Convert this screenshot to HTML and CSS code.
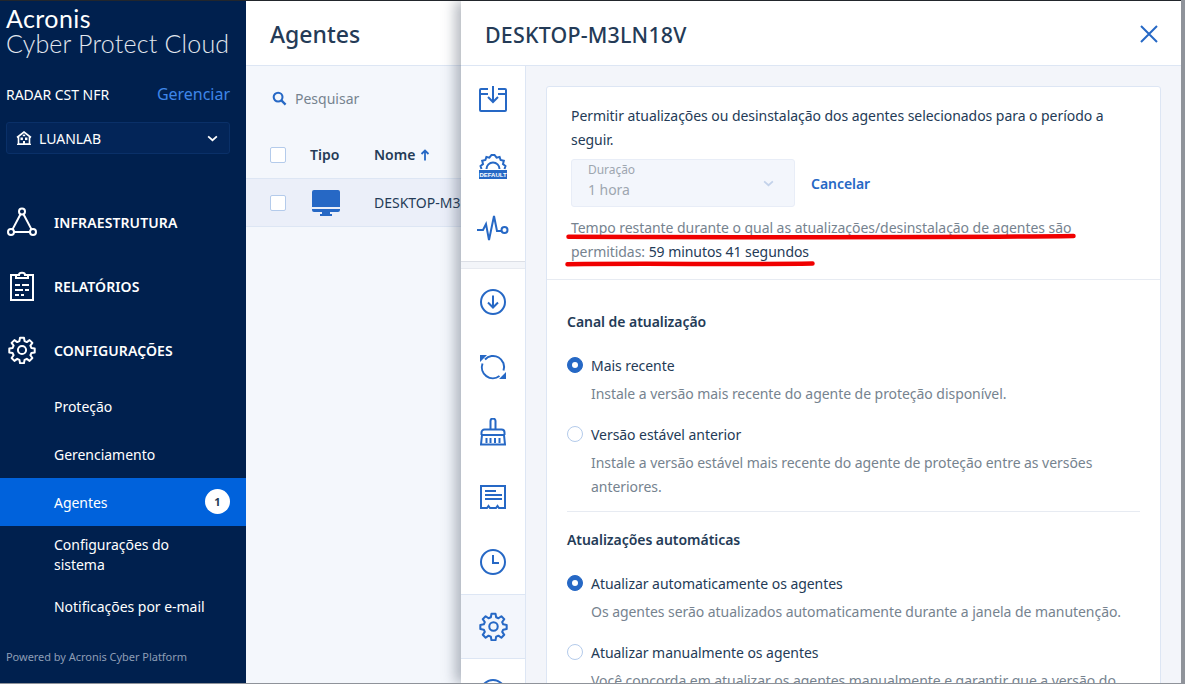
FILE: index.html
```html
<!DOCTYPE html>
<html lang="pt">
<head>
<meta charset="utf-8">
<title>Agentes</title>
<link rel="stylesheet" href="styles.css">
</head>
<body>
<div class="window">
  <aside class="sidebar">
    <div class="logo">
      <div class="logo-a">Acronis</div>
      <div class="logo-b">Cyber Protect Cloud</div>
    </div>
    <div class="account"><span>RADAR CST NFR</span><a class="manage">Gerenciar</a></div>
    <div class="tenant">
      <svg class="tenant-ic" viewBox="0 0 16 14" width="16" height="14"><path d="M1 6.500 8 1l7 5.500M2.500 6v7h11V6M1 13.500h14" fill="none" stroke="#fff" stroke-width="1.600"/><rect x="4.500" y="6.500" width="2.400" height="2.600" fill="#fff"/><rect x="9" y="6.500" width="2.400" height="2.600" fill="#fff"/><rect x="6.800" y="3.600" width="2.400" height="1.600" fill="#fff"/><rect x="7" y="10" width="2" height="3" fill="#fff"/></svg>
      <span class="tenant-name">LUANLAB</span>
      <svg class="chev" viewBox="0 0 12 8" width="11" height="7"><path d="M1 1.500 6 6l5-4.500" fill="none" stroke="#fff" stroke-width="2"/></svg>
    </div>
    <nav class="nav">
      <div class="nav-main">
        <svg viewBox="0 0 32 32" width="32" height="32"><g fill="none" stroke="#fff" stroke-width="2"><circle cx="16" cy="5.500" r="3"/><circle cx="5" cy="26" r="3"/><circle cx="27" cy="26" r="3"/><path d="M14.500 8.200 6.500 23.400M17.500 8.200l8 15.200M8 26h16"/></g></svg>
        <span>INFRAESTRUTURA</span>
      </div>
      <div class="nav-main">
        <svg viewBox="0 0 32 32" width="32" height="32"><g fill="none" stroke="#fff" stroke-width="2"><path d="M10 5H5v25h22V5h-5"/><path d="M10 8V5h3c0-3 6-3 6 0h3v3z"/></g><path d="M9 14h5v2H9zM16 14h7v2h-7zM9 19h8v2H9zM19 19h4v2h-4zM9 24h4v2H9zM15 24h3v2h-3z" fill="#fff"/></svg>
        <span>RELATÓRIOS</span>
      </div>
      <div class="nav-main">
        <svg class="nav-gear" viewBox="0 0 24 24" width="28" height="28"><use href="#gear" stroke="#fff"/></svg>
        <span>CONFIGURAÇÕES</span>
      </div>
      <div class="nav-subs">
        <div class="nav-sub">Proteção</div>
        <div class="nav-sub">Gerenciamento</div>
        <div class="nav-sub active">Agentes<span class="badge">1</span></div>
        <div class="nav-sub tall">Configurações do sistema</div>
        <div class="nav-sub">Notificações por e-mail</div>
      </div>
    </nav>
    <div class="powered">Powered by Acronis Cyber Platform</div>
  </aside>

  <main class="main">
    <header class="main-head">Agentes</header>
    <div class="search">
      <svg viewBox="0 0 16 16" width="15" height="15"><circle cx="6.500" cy="6.500" r="4.700" fill="none" stroke="#2668c5" stroke-width="2.200"/><path d="m10 10 4.500 4.500" stroke="#2668c5" stroke-width="2.400"/></svg>
      <span>Pesquisar</span>
    </div>
    <div class="table-head">
      <span class="check"></span>
      <span class="col-type">Tipo</span>
      <span class="col-name">Nome <svg viewBox="0 0 10 12" width="10" height="12"><path d="M5 11.500V2M1.500 5 5 1.500 8.500 5" fill="none" stroke="#2668c5" stroke-width="1.800"/></svg></span>
    </div>
    <div class="table-row">
      <span class="check"></span>
      <span class="col-type"><svg viewBox="0 0 28 26" width="28" height="26"><path d="M2 0h24a2 2 0 0 1 2 2v15H0V2a2 2 0 0 1 2-2zM0 19h28v1a2 2 0 0 1-2 2H18v2h2v2H8v-2h2v-2H2a2 2 0 0 1-2-2z" fill="#2668c5"/></svg></span>
      <span class="col-name regular">DESKTOP-M3LN18V</span>
    </div>
  </main>

  <section class="panel">
    <header class="panel-head">
      <h1>DESKTOP-M3LN18V</h1>
      <svg class="close" viewBox="0 0 18 18" width="18" height="18"><path d="m1 1 16 16M17 1 1 17" stroke="#2668c5" stroke-width="2" fill="none"/></svg>
    </header>
    <div class="panel-body">
      <div class="rail">
        <div class="rail-item"><svg viewBox="0 0 28 26" width="28" height="26"><g fill="none" stroke="#2668c5" stroke-width="2"><path d="M9 3H2a1 1 0 0 0-1 1v20a1 1 0 0 0 1 1h24a1 1 0 0 0 1-1V4a1 1 0 0 0-1-1h-7"/><path d="M1 8h8M19 8h8M14 0v15M9 11l5 5 5-5"/></g></svg></div>
        <div class="rail-item"><svg viewBox="0 0 28 30" width="28" height="30"><path d="M7.500 20a6.500 6.500 0 1 1 13 0M2.500 20l-1-3 2.500-2-.8-3.200 3.200-.8 1-3 3 .7L12.500 6h3l2.100 2.700 3-.7 1 3 3.200.8-.8 3.200 2.500 2-1 3" fill="none" stroke="#2668c5" stroke-width="2"/><rect y="21" width="28" height="9" fill="#2668c5"/><text x="14" y="28" class="default-txt">DEFAULT</text></svg></div>
        <div class="rail-item"><svg viewBox="0 0 32 28" width="32" height="28"><path d="M0 15h6l3-6 3 16 5-24 3 15h4" fill="none" stroke="#2668c5" stroke-width="2"/><circle cx="27.500" cy="15" r="3" fill="none" stroke="#2668c5" stroke-width="2"/></svg></div>
        <div class="rail-sep"></div>
        <div class="rail-item"><svg viewBox="0 0 26 26" width="26" height="26"><circle cx="13" cy="13" r="12" fill="none" stroke="#2668c5" stroke-width="2"/><path d="M13 6.500v12M8 13.500l5 5 5-5" fill="none" stroke="#2668c5" stroke-width="2"/></svg></div>
        <div class="rail-item"><svg viewBox="0 0 28 26" width="28" height="26"><path d="M6 5.500A11 11 0 0 1 24.500 16.500M3.500 9.500A11 11 0 0 0 20.500 22" fill="none" stroke="#2668c5" stroke-width="2"/><path d="M1 1h7L1 8zM27 25h-7l7-7z" fill="#2668c5"/></svg></div>
        <div class="rail-item"><svg viewBox="0 0 26 28" width="26" height="28"><path d="M10.500 11V3a2.500 2.500 0 0 1 5 0v8M1.500 17v-2.500a3 3 0 0 1 3-3h17a3 3 0 0 1 3 3V17M1.500 17h23M2 17l-1 9.500h24L24 17M6.500 20v5M10.500 20v5M15 20v5M19.500 20v5" fill="none" stroke="#2668c5" stroke-width="2"/></svg></div>
        <div class="rail-item"><svg viewBox="0 0 26 24" width="26" height="24"><path d="M1 1h24v22h-6l-1.500-2-1.500 2h-6l-1.500-2L7 23H1z" fill="none" stroke="#2668c5" stroke-width="2"/><path d="M5 5h11v2H5zM5 9h17v2H5zM5 13h17v2H5z" fill="#2668c5"/></svg></div>
        <div class="rail-item"><svg viewBox="0 0 26 26" width="26" height="26"><circle cx="13" cy="13" r="12" fill="none" stroke="#2668c5" stroke-width="2"/><path d="M13 6v8h6" fill="none" stroke="#2668c5" stroke-width="2"/></svg></div>
        <div class="rail-item selected"><svg viewBox="0 0 24 24" width="29" height="29"><use href="#gear" stroke="#2668c5"/></svg></div>
        <div class="rail-item"><svg viewBox="0 0 26 26" width="26" height="26"><circle cx="13" cy="13" r="12" fill="none" stroke="#2668c5" stroke-width="2"/></svg></div>
      </div>
      <div class="content">
        <div class="card">
          <div class="card-top">
            <p class="lead">Permitir atualizações ou desinstalação dos agentes selecionados para o período a seguir.</p>
            <div class="duration-row">
              <div class="duration">
                <div class="duration-text">
                  <div class="duration-label">Duração</div>
                  <div class="duration-value">1 hora</div>
                </div>
                <svg viewBox="0 0 12 8" width="11" height="7"><path d="M1 1.500 6 6l5-4.500" fill="none" stroke="#c3d2ea" stroke-width="2"/></svg>
              </div>
              <a class="cancel">Cancelar</a>
            </div>
            <p class="remaining">Tempo restante durante o qual as atualizações/desinstalação de agentes são permitidas: <span class="time">59 minutos 41 segundos</span></p>
          </div>
          <div class="card-rest">
            <h2 class="group-title">Canal de atualização</h2>
            <div class="radio-opt on first"><span class="radio"></span>Mais recente</div>
            <p class="hint">Instale a versão mais recente do agente de proteção disponível.</p>
            <div class="radio-opt"><span class="radio"></span>Versão estável anterior</div>
            <p class="hint">Instale a versão estável mais recente do agente de proteção entre as versões anteriores.</p>
            <hr class="rule">
            <h2 class="group-title second">Atualizações automáticas</h2>
            <div class="radio-opt on lead-opt"><span class="radio"></span>Atualizar automaticamente os agentes</div>
            <p class="hint">Os agentes serão atualizados automaticamente durante a janela de manutenção.</p>
            <div class="radio-opt"><span class="radio"></span>Atualizar manualmente os agentes</div>
            <p class="hint">Você concorda em atualizar os agentes manualmente e garantir que a versão do agente esteja sempre atualizada.</p>
          </div>
        </div>
      </div>
    </div>
    <svg class="marks" viewBox="0 0 720 684" width="720" height="684"><path d="M107.500 236.800C250 237 480 238 612.500 236M106.500 264.200C200 263 270 264.800 351.500 263.500" fill="none" stroke="#f00000" stroke-width="4.500" stroke-linecap="round"/></svg>
  </section>
</div>
<svg class="defs" width="0" height="0"><defs><g id="gear" fill="none" stroke-width="1.700"><circle cx="12" cy="12" r="3.500"/><path d="M10.300 1.500h3.400l.5 2.900 1.900.8 2.400-1.700 2.400 2.400-1.700 2.400.8 1.900 2.900.5v3.400l-2.900.5-.8 1.900 1.700 2.400-2.400 2.400-2.400-1.700-1.900.8-.5 2.900h-3.400l-.5-2.900-1.900-.8-2.400 1.700-2.400-2.400 1.700-2.400-.8-1.900-2.900-.5v-3.400l2.900-.5.8-1.900-1.700-2.400 2.400-2.400 2.400 1.700 1.900-.8z" stroke-linejoin="round"/></g></defs></svg>
</body>
</html>
```
FILE: styles.css
```css
* { box-sizing: border-box; }
html, body { margin: 0; height: 100%; overflow: hidden; }
body { font-family: "Noto Sans", "Open Sans", sans-serif; font-size: 14px; color: #243b57; background: #8f939a; }
p, h1, h2 { margin: 0; }
.defs { display: block; height: 0; }
.window { display: flex; width: 1181px; height: 683px; position: relative; overflow: hidden; border-top: 1px solid #22262c; background: #f4f7fc; }

.sidebar { width: 246px; flex: none; background: #00204e; color: #fff; display: flex; flex-direction: column; position: relative; letter-spacing: -.03px; }
.logo { padding: 5px 0 0 6px; height: 76px; }
.logo-a { font-family: "Lato", sans-serif; font-size: 25px; line-height: 25px; font-weight: 400; letter-spacing: .4px; }
.logo-b { font-family: "Lato", sans-serif; font-size: 25px; line-height: 25px; font-weight: 300; letter-spacing: .2px; color: #e2e7ef; white-space: nowrap; }
.account { display: flex; justify-content: space-between; align-items: center; padding: 0 16px 2px 6px; height: 36px; font-size: 14px; }
.manage { color: #3f86e8; font-size: 16px; }
.tenant { display: flex; align-items: center; margin: 9px 16px 0 6px; height: 32px; padding: 0 11px 0 9px; background: #032558; border: 1px solid #0a3068; border-radius: 3px; }
.tenant-name { margin-left: 7px; flex: 1; font-size: 14px; }
.nav { display: flex; flex-direction: column; margin-top: 36px; }
.nav-main { display: flex; align-items: center; height: 64px; padding-left: 6px; font-weight: 600; font-size: 14px; letter-spacing: .1px; }
.nav-main svg { margin-right: 16px; flex: none; }
.nav-main .nav-gear { margin: 0 18px 0 2px; }
.nav-sub { display: flex; align-items: center; justify-content: space-between; height: 48px; padding: 2px 16px 0 54px; font-size: 14px; line-height: 20px; }
.nav-sub.tall { height: 56px; padding-right: 40px; }
.nav-sub.active { background: #0062dc; }
.badge { width: 25px; height: 25px; border-radius: 50%; background: #fff; color: #243b57; font-size: 11px; font-weight: 700; display: flex; align-items: center; justify-content: center; margin-top: -3px; }
.powered { position: absolute; left: 6px; top: 648px; font-size: 11px; line-height: 16px; color: #8d9db5; }

.main { flex: 1; min-width: 0; overflow: hidden; }
.main-head { height: 65px; background: #fff; border-bottom: 1px solid #dde6f4; padding: 17px 0 0 24px; font-size: 23px; line-height: 32px; font-weight: 500; color: #243b57; }
.search { display: flex; align-items: center; gap: 8px; height: 65px; padding: 0 0 1px 26px; color: #76838f; font-size: 14px; }
.table-head, .table-row { display: flex; align-items: center; padding-left: 24px; white-space: nowrap; }
.table-head { height: 48px; font-weight: 600; border-bottom: 1px solid #dde6f4; }
.table-row { height: 48px; background: #ebeff9; border-bottom: 1px solid #dde6f4; }
.check { width: 16px; height: 16px; background: #fff; border: 1px solid #b4cbeb; border-radius: 2px; flex: none; }
.col-type { width: 64px; margin-left: 24px; display: flex; }
.table-row .col-type { padding-left: 2px; }
.col-name { display: inline-flex; gap: 5px; align-items: center; }
.col-name.regular { font-weight: 400; }

.panel { position: absolute; left: 461px; top: 0; bottom: 0; width: 720px; background: #fff; box-shadow: -6px 0 12px rgba(50,60,80,.35); display: flex; flex-direction: column; overflow: hidden; }
.panel-head { flex: none; height: 65px; display: flex; align-items: center; justify-content: space-between; padding: 2px 23px 0 24px; border-bottom: 1px solid #dde6f4; }
.panel-head h1 { font-size: 21.400px; font-weight: 500; color: #243b57; letter-spacing: .2px; }
.panel-body { flex: 1; display: flex; min-height: 0; }
.rail { width: 65px; flex: none; border-right: 1px solid #dde6f4; background: #fff; }
.rail-item { height: 65px; display: flex; align-items: center; justify-content: center; }
.rail-item.selected { background: #f3f6fc; border-top: 1px solid #dde6f4; border-bottom: 1px solid #dde6f4; }
.rail-sep { height: 8px; background: #f3f5f9; border-top: 1px solid #dcdfe6; border-bottom: 1px solid #e7eaf0; }
.default-txt { font-family: "Liberation Sans", sans-serif; font-size: 6px; font-weight: 700; fill: #fff; text-anchor: middle; }
.content { flex: 1; background: #f3f5fa; padding: 20px 20px 0; min-width: 0; letter-spacing: -.05px; }
.card { background: #fff; border: 1px solid #dde6f4; border-radius: 3px; height: 700px; }
.card-top { padding: 17px 24px 0; height: 193px; border-bottom: 1px solid #e7ebf2; }
.lead { line-height: 24px; color: #243b57; }
.duration-row { display: flex; align-items: center; margin-top: 7px; }
.duration { width: 224px; height: 48px; background: #f3f6fc; border: 1px solid #e8edf7; border-radius: 3px; display: flex; align-items: center; justify-content: space-between; padding: 0 20px 0 16px; }
.duration-text { padding-bottom: 4px; }
.duration-label { font-size: 12px; line-height: 16px; color: #9ea6b0; }
.duration-value { font-size: 14px; line-height: 23px; color: #9ea6b0; }
.cancel { margin-left: 16px; color: #2668c5; font-weight: 600; }
.remaining { margin-top: 9px; line-height: 24px; color: #76838f; }
.time { color: #243b57; }
.card-rest { padding: 30px 20px 0; }
.group-title { font-size: 14px; line-height: 24px; font-weight: 600; color: #243b57; }
.group-title.second { margin-top: 16px; }
.radio-opt { display: flex; align-items: center; gap: 8px; height: 24px; margin-top: 16px; color: #243b57; }
.radio-opt.first { margin-top: 19px; }
.radio-opt.lead-opt { margin-top: 19px; }
.radio { width: 16px; height: 16px; border-radius: 50%; border: 1px solid #b4cbeb; background: #fff; flex: none; }
.on .radio { background: #2668c5; border-color: #2668c5; }
.on .radio::after { content: ""; display: block; width: 6px; height: 6px; border-radius: 50%; background: #fff; margin: 4px; }
.hint { margin: 5px 0 0 24px; line-height: 24px; color: #76838f; }
.rule { border: 0; border-top: 1px solid #e7ebf2; margin: 12px 0 0; }
.marks { position: absolute; left: 0; top: -1px; pointer-events: none; }
```
